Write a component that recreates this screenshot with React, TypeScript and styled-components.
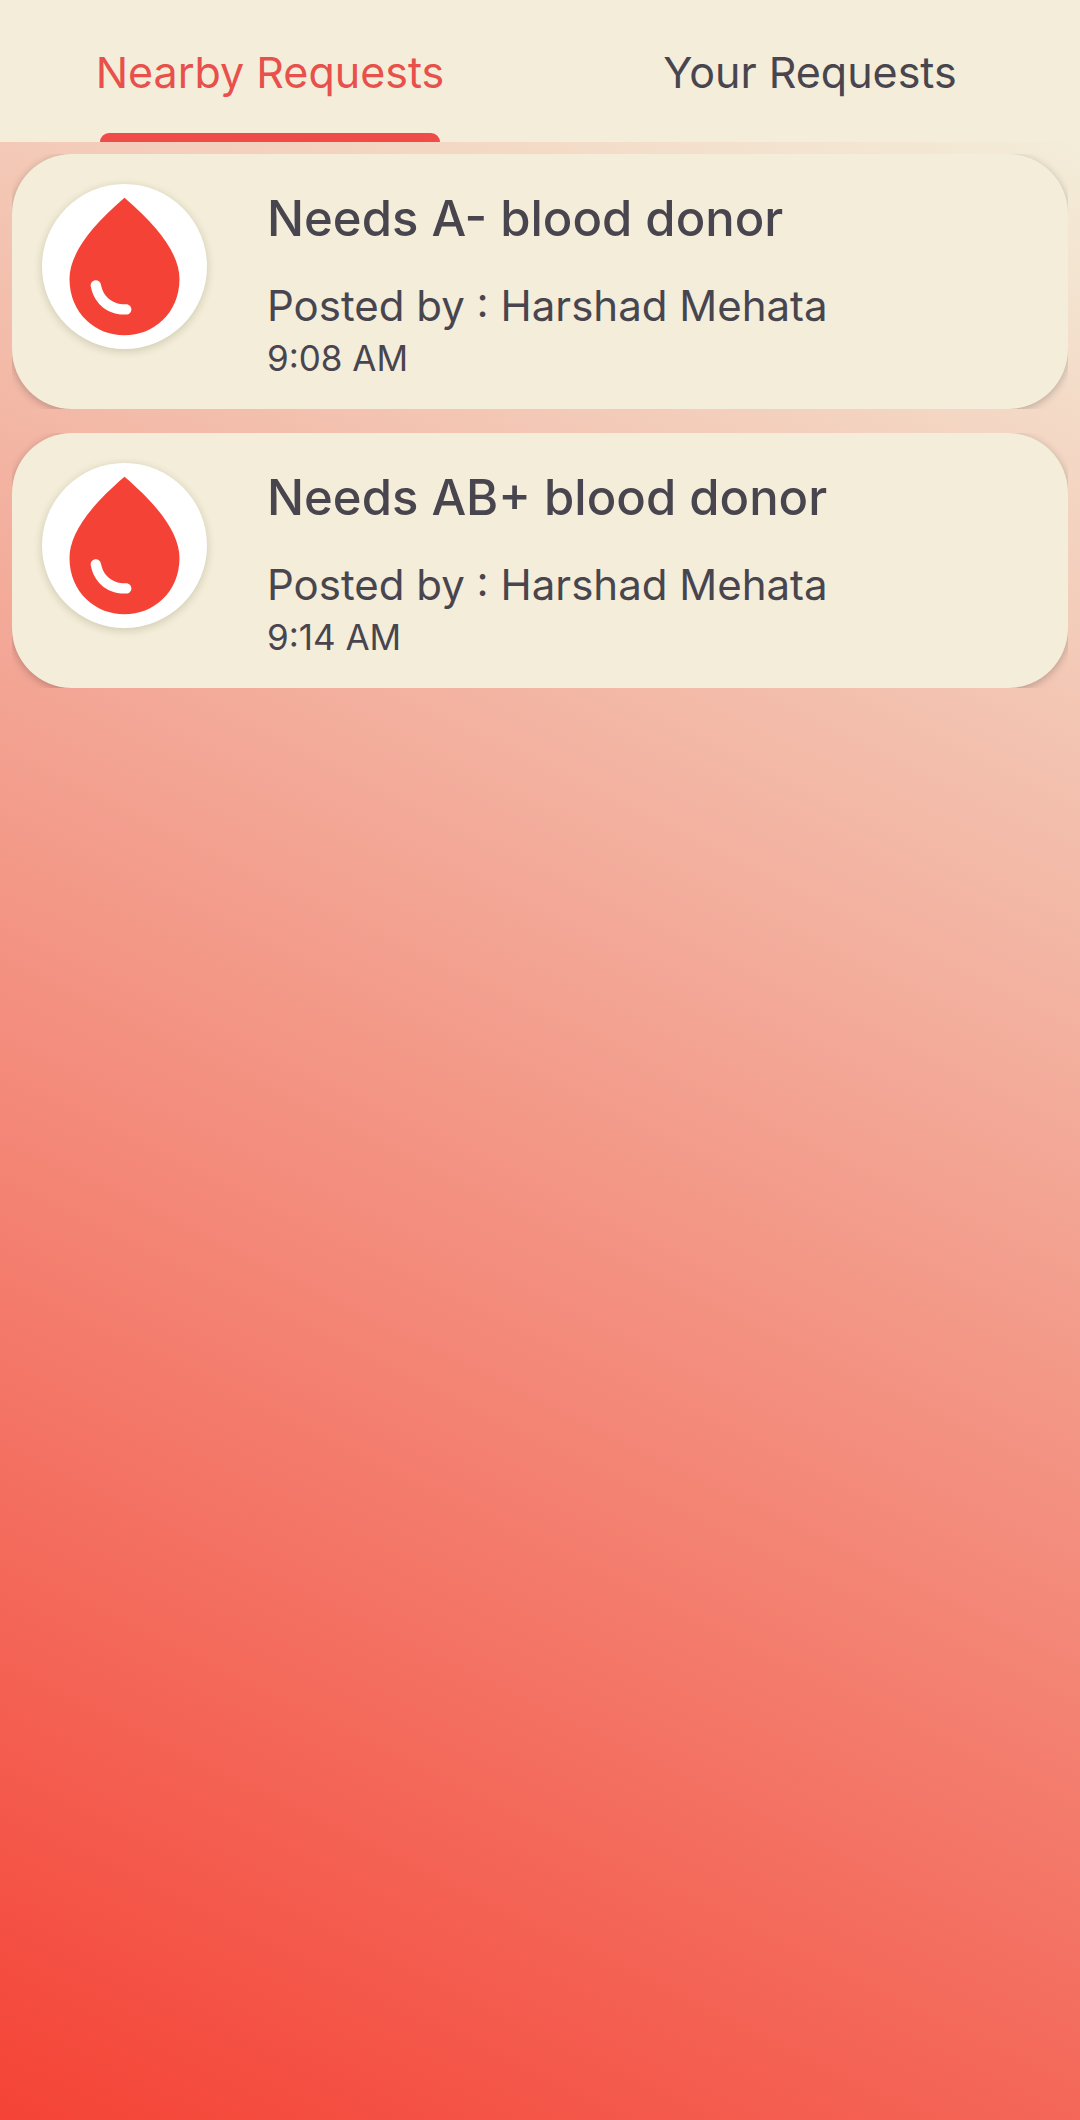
import React, { useState } from "react";
import styled, { createGlobalStyle } from "styled-components";

const GlobalStyle = createGlobalStyle`
  * { box-sizing: border-box; }
  body { margin: 0; background: #f3edd9; }
`;

const Page = styled.div`
  display: flex;
  flex-direction: column;
  min-height: 100vh;
  color: #49454f;
  font-family: Inter, Roboto, sans-serif;
`;

const TabBar = styled.div`
  display: flex;
  height: 142px;
  background: #f3edd9;
`;

const Tab = styled.button<{ $active: boolean }>`
  flex: 1;
  display: grid;
  grid-template-rows: 10px 1fr 9px;
  justify-items: center;
  align-items: center;
  padding: 0;
  border: 0;
  background: none;
  color: ${(p) => (p.$active ? "#e8504c" : "inherit")};
  font: inherit;
  font-size: 43px;
  line-height: 56px;
  cursor: pointer;
`;

const TabLabel = styled.span`
  grid-row: 2;
`;

const Indicator = styled.span`
  grid-row: 3;
  width: 63%;
  height: 9px;
  border-radius: 9px 9px 0 0;
  background: #ee4b49;
`;

const Feed = styled.main`
  flex: 1;
  padding: 12px;
  background: linear-gradient(26deg, #f44336, #f3edd9);
`;

const RequestList = styled.ul`
  display: flex;
  flex-direction: column;
  gap: 24px;
  margin: 0;
  padding: 0;
  list-style: none;
`;

const RequestItem = styled.li`
  overflow: hidden;
`;

const Card = styled.article`
  display: flex;
  align-items: flex-start;
  gap: 60px;
  padding: 30px 30px 27px;
  border-radius: 60px;
  background: #f3edd9;
  box-shadow: 0 2px 9px rgba(0, 0, 0, 0.24);
`;

const Avatar = styled.div`
  flex: none;
  width: 165px;
  height: 165px;
  border-radius: 50%;
  background: #fff;
  box-shadow: 0 2px 8px rgba(60, 60, 20, 0.2);
`;

const DropIcon = styled.svg`
  display: block;
  width: 100%;
  height: 100%;
  fill: #f44336;
`;

const Details = styled.div`
  min-width: 0;
`;

const Title = styled.h2`
  margin: 0 0 24px;
  font-size: 49px;
  font-weight: 500;
  line-height: 70px;
`;

const Author = styled.p`
  margin: 0;
  font-size: 42px;
  line-height: 56px;
`;

const Time = styled.time`
  display: block;
  font-size: 35px;
  line-height: 48px;
`;

const tabs = ["Nearby Requests", "Your Requests"];

const requests = [
  { group: "A-", author: "Harshad Mehata", time: "9:08 AM" },
  { group: "AB+", author: "Harshad Mehata", time: "9:14 AM" },
];

export default function App() {
  const [active, setActive] = useState(0);
  return (
    <Page>
      <GlobalStyle />
      <TabBar role="tablist">
        {tabs.map((label, i) => (
          <Tab
            key={label}
            type="button"
            role="tab"
            aria-selected={i === active}
            $active={i === active}
            onClick={() => setActive(i)}
          >
            <TabLabel>{label}</TabLabel>
            {i === active && <Indicator />}
          </Tab>
        ))}
      </TabBar>
      <Feed>
        <RequestList>
          {requests.map((r) => (
            <RequestItem key={r.group}>
              <Card>
                <Avatar>
                  <DropIcon viewBox="0 0 24 24" aria-hidden="true">
                    <path d="M12,2c-5.33,4.55-8,8.48-8,11.8c0,4.98,3.8,8.2,8,8.2s8-3.22,8-8.2C20,10.48,17.33,6.55,12,2z M7.83,14c0.37,0,0.67,0.26,0.74,0.62c0.41,2.22,2.28,2.98,3.64,2.87c0.43-0.02,0.79,0.32,0.79,0.75c0,0.4-0.32,0.73-0.72,0.75c-2.13,0.13-4.62-1.09-5.19-4.12C7.01,14.42,7.37,14,7.83,14z" />
                  </DropIcon>
                </Avatar>
                <Details>
                  <Title>Needs {r.group} blood donor</Title>
                  <Author>Posted by : {r.author}</Author>
                  <Time>{r.time}</Time>
                </Details>
              </Card>
            </RequestItem>
          ))}
        </RequestList>
      </Feed>
    </Page>
  );
}
